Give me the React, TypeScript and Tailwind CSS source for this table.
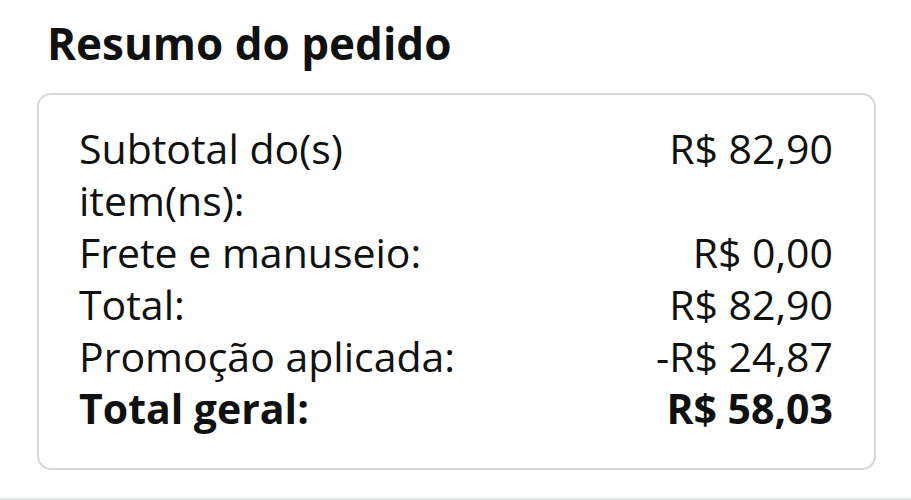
const rows = [
  { label: "Subtotal do(s) item(ns):", value: "R$ 82,90" },
  { label: "Frete e manuseio:", value: "R$ 0,00" },
  { label: "Total:", value: "R$ 82,90" },
  { label: "Promoção aplicada:", value: "-R$ 24,87" },
];

export default function App() {
  return (
    <div
      className="w-[911px] h-[500px] bg-white border-b-2 border-[#e3e6e6] text-[#0f1111]"
      style={{ fontFamily: '"Open Sans", "Noto Sans", sans-serif' }}
    >
      <div className="pt-[17px] pl-[47px]">
        <h1 className="text-[44px] leading-[52px] font-bold">Resumo do pedido</h1>
      </div>
      <div className="mt-[24px] ml-[37px] w-[839px] h-[377px] border-2 border-[#d5d9d9] rounded-[14px] pl-[40px] pr-[41px] pt-[27px]">
        {rows.map((r) => (
          <div key={r.label} className="flex justify-between text-[41px] leading-[52px]">
            <span className="w-[400px]">{r.label}</span>
            <span>{r.value}</span>
          </div>
        ))}
        <div className="flex justify-between text-[41px] leading-[52px] font-bold">
          <span>Total geral:</span>
          <span>R$ 58,03</span>
        </div>
      </div>
    </div>
  );
}
